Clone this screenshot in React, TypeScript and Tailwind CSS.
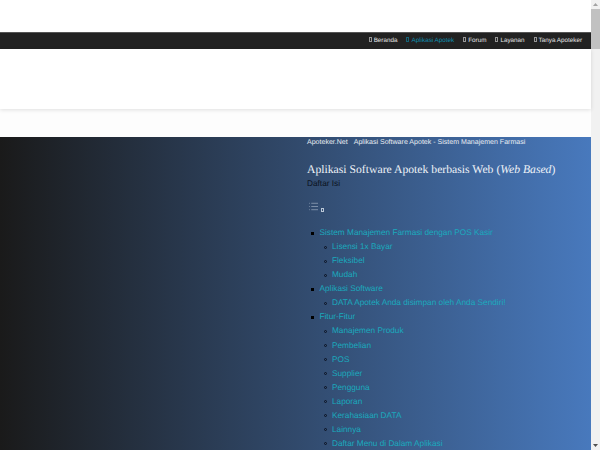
import React from 'react';
import { List } from 'lucide-react';

const navItems = ['Beranda', 'Aplikasi Apotek', 'Forum', 'Layanan', 'Tanya Apoteker'];

const toc = [
  { title: 'Sistem Manajemen Farmasi dengan POS Kasir', subs: ['Lisensi 1x Bayar', 'Fleksibel', 'Mudah'] },
  { title: 'Aplikasi Software', subs: ['DATA Apotek Anda disimpan oleh Anda Sendiri!'] },
  {
    title: 'Fitur-Fitur',
    subs: ['Manajemen Produk', 'Pembelian', 'POS', 'Supplier', 'Pengguna', 'Laporan', 'Kerahasiaan DATA', 'Lainnya', 'Daftar Menu di Dalam Aplikasi'],
  },
];

const Tofu = () => <span className="inline-block w-[3px] h-[5px] border-[0.5px] border-current opacity-60 mr-[2px]" />;

const Scrollbar = () => (
  <div className="w-[9px] h-full bg-[#f1f1f1] flex flex-col items-center shrink-0">
    <svg width="9" height="9" viewBox="0 0 9 9"><path d="M4.5 3 L7 6 H2 Z" fill="#a3a3a3" /></svg>
    <div className="w-full h-[40px] bg-[#c1c1c1]" />
    <div className="flex-1" />
    <svg width="9" height="9" viewBox="0 0 9 9"><path d="M4.5 6 L7 3 H2 Z" fill="#505050" /></svg>
  </div>
);

export default function App() {
  return (
    <div className="flex h-[450px] w-[600px] overflow-hidden bg-white font-['Liberation_Sans',sans-serif] [text-rendering:geometricPrecision]">
      <div className="w-[591px] flex flex-col">
        <div className="h-[32px] bg-white" />
        <nav className="h-[17px] bg-[#222222] border-t border-[#555555] flex items-center justify-end gap-[9px] pr-[9px] text-[6.3px] text-[#e5e5e5]">
          {navItems.map((item) => (
            <a key={item} className={item === 'Aplikasi Apotek' ? 'text-[#0e8fb0]' : ''}>
              <Tofu />
              {item}
            </a>
          ))}
        </nav>
        <div className="h-[60px] bg-white shadow-[0_1px_4px_rgba(0,0,0,0.12)] relative" />
        <div className="h-[28px] bg-[#fdfdfd]" />
        <main className="flex-1 flex bg-[linear-gradient(to_right,#1a1a1a,#4879bd)] overflow-hidden">
          <div className="w-[307px] shrink-0" />
          <div className="flex-1 min-w-0">
            <div className="text-[7.05px] leading-[10px] text-[#e8edf3] mt-[1px] flex gap-[6px]">
              <span>Apoteker.Net</span>
              <span>Aplikasi Software Apotek - Sistem Manajemen Farmasi</span>
            </div>
            <h1 className="font-['Liberation_Serif',serif] text-[11.7px] leading-[16px] text-[#eef2f7] mt-[14px]">
              Aplikasi Software Apotek berbasis Web (<em>Web Based</em>)
            </h1>
            <div className="text-[8.25px] leading-[12px] text-[#0b1220]">Daftar Isi</div>
            <div className="flex items-end h-[12px] mt-[10px] ml-[1px] text-[#b9c6d6]">
              <List size={11} strokeWidth={1.2} />
              <span className="w-[3px] h-[4px] border-[0.5px] border-current ml-[2px]" />
            </div>
            <ul className="mt-[14px] text-[8.25px] leading-[14.07px] text-[#1aaabd]">
              {toc.map((sec) => (
                <li key={sec.title}>
                  <div className="flex items-center">
                    <span className="w-[3px] h-[3px] bg-black ml-[4px] mr-[5.5px]" />
                    <a>{sec.title}</a>
                  </div>
                  <ul className="pl-[12.5px]">
                    {sec.subs.map((s) => (
                      <li key={s} className="flex items-center">
                        <span className="w-[3px] h-[3px] rounded-full border-[0.75px] border-[#0b1220] ml-[4px] mr-[5.5px]" />
                        <a>{s}</a>
                      </li>
                    ))}
                  </ul>
                </li>
              ))}
            </ul>
          </div>
        </main>
      </div>
      <Scrollbar />
    </div>
  );
}
